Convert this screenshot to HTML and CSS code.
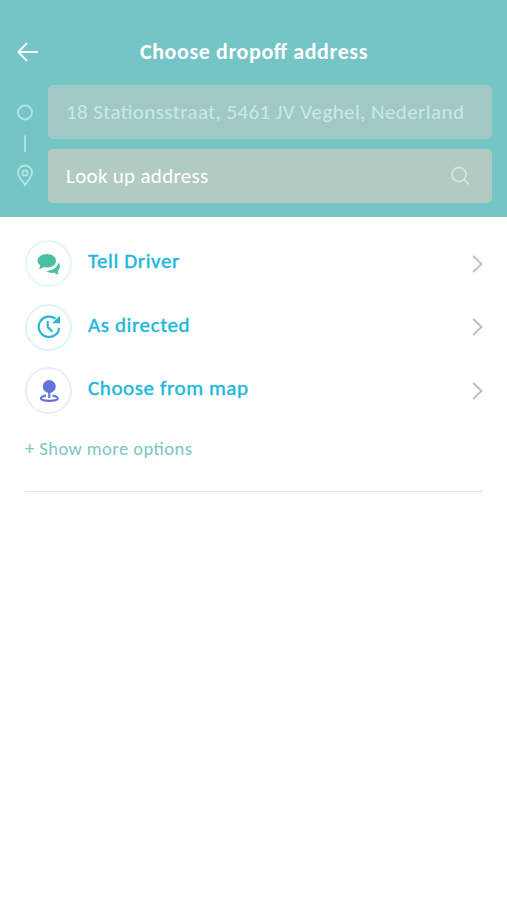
FILE: index.html
```
<!DOCTYPE html>
<html lang="en">
  <head>
    <meta charset="utf-8">
    <meta name="viewport" content="width=device-width">
    <title>Choose dropoff address</title>
    <link rel="stylesheet" href="styles.css">
  </head>
  <body>
    <header class="header">
      <div class="topbar">
        <svg class="back" width="22" height="20" viewBox="0 0 22 20"><path d="M22 10H2.500M11 1.200L2.300 10L11 18.800"/></svg>
        <h1><span>Choose dropoff address</span></h1>
      </div>
      <div class="route">
        <!-- pickup to dropoff markers -->
        <svg class="markers" width="18" height="84" viewBox="0 0 18 84">
          <circle cx="9" cy="9.500" r="7"/>
          <path d="M9 32.500V49"/>
          <path d="M9 82C6 77 2 74 2 69.500A7 7 0 0 1 16 69.500C16 74 12 77 9 82Z"/>
          <circle cx="9" cy="70" r="2.600"/>
        </svg>
        <div class="fields">
          <div class="field pickup"><span>18 Stationsstraat, 5461 JV Veghel, Nederland</span></div>
          <div class="field dropoff">
            <span>Look up address</span>
            <svg class="search" width="20" height="20" viewBox="0 0 20 20"><circle cx="9" cy="8.500" r="7"/><path d="M14 13.500L19 18.300"/></svg>
          </div>
        </div>
      </div>
    </header>
    <main>
      <ul class="options">
        <li>
          <div class="icon tell">
            <svg width="24" height="24" viewBox="0 0 24 24">
              <path d="M10 2C15 2 19 4.800 19 8.800S15 15.500 10 15.500C8.700 15.500 7.700 15.400 6.700 15.100C5.300 16.300 3.700 17 1.800 17.100C2.700 16 3.200 14.800 3.200 13.300C1.400 12 .5 10.600 .5 8.800C.5 4.800 5 2 10 2Z"/>
              <path d="M21.500 10.500C23.700 13.500 23.300 16.800 20.800 18.800C20.900 20.400 21.200 21.600 22 22.700C19.900 22.500 18.300 21.700 17 20.600C14.300 21.300 11.500 20.700 9.500 19C15.300 18.800 20.300 15.700 21.500 10.500Z"/>
            </svg>
          </div>
          <span class="label">Tell Driver</span>
          <svg class="chevron" width="11" height="18" viewBox="0 0 11 18"><path d="M1.200 1L9.500 9L1.200 17"/></svg>
        </li>
        <li>
          <div class="icon directed">
            <svg width="24" height="24" viewBox="0 0 24 24">
              <path class="line" d="M18.500 3.800C14 .3 7 1 3.500 6C-.5 12 2.500 19.700 9.500 21.600C16.500 23.300 22 18.500 22 12.800M10.700 6V12L15.500 16.800"/>
              <path d="M23 .8V8.300H14.800Z"/>
            </svg>
          </div>
          <span class="label">As directed</span>
          <svg class="chevron" width="11" height="18" viewBox="0 0 11 18"><path d="M1.200 1L9.500 9L1.200 17"/></svg>
        </li>
        <li>
          <div class="icon map">
            <svg width="24" height="24" viewBox="0 0 24 24">
              <circle cx="12.300" cy="7.500" r="6.500"/>
              <path class="line" d="M12.300 13V19M9 16.700C1.700 17.700 1.700 21.800 12.300 21.800S22.900 17.700 15.500 16.700"/>
            </svg>
          </div>
          <span class="label">Choose from map</span>
          <svg class="chevron" width="11" height="18" viewBox="0 0 11 18"><path d="M1.200 1L9.500 9L1.200 17"/></svg>
        </li>
      </ul>
      <div class="more"><span>+ Show more options</span></div>
    </main>
  </body>
</html>
```
FILE: styles.css
```
* { box-sizing: border-box; }
body {
  margin: 0;
  background: #fff;
  font-family: Carlito, Lato, sans-serif;
  font-feature-settings: "liga" 1;
}
svg {
  display: block;
  flex: none;
  fill: none;
  stroke-width: 1.8;
}
.header {
  height: 217px;
  padding: 36px 15px 0 16px;
  background: #75c5c6;
}
.topbar {
  display: grid;
  grid-template-columns: 22px 1fr 22px;
  align-items: center;
  height: 32px;
}
.back { stroke: #fff; }
h1 {
  margin: 0;
  text-align: center;
  color: #fff;
  font-size: 22px;
  line-height: 30px;
  font-weight: 700;
  letter-spacing: .6px;
}
.route {
  display: flex;
  margin-top: 17px;
}
.markers {
  margin: 18px 14px 0 0;
  stroke: #b4e5e3;
}
.fields {
  flex: 1;
  display: flex;
  flex-direction: column;
  gap: 10px;
}
.field {
  display: flex;
  align-items: center;
  justify-content: space-between;
  height: 54px;
  padding: 0 22px 0 18px;
  border-radius: 5px;
  font-size: 21px;
  letter-spacing: .4px;
  white-space: nowrap;
}
.pickup {
  background: #a0c9c5;
  color: #c8e9e5;
}
.dropoff {
  background: #b1cbc3;
  color: #fff;
  letter-spacing: .3px;
}
.search { stroke: #d0e5dd; }
.options {
  margin: 0;
  padding: 23px 24px 0 25px;
  list-style: none;
}
.options li {
  display: flex;
  align-items: center;
  height: 47px;
  margin-bottom: 16.5px;
}
.icon {
  display: flex;
  align-items: center;
  justify-content: center;
  width: 47px;
  height: 47px;
  margin-right: 16px;
  border: 2px solid;
  border-radius: 50%;
}
.icon svg { fill: currentColor; }
.icon .line {
  fill: none;
  stroke: currentColor;
  stroke-width: 2.2;
}
.icon.tell { color: #4bbf9f; border-color: #e2f7f4; }
.icon.directed { color: #27b7d5; border-color: #dcf7f8; }
.icon.map { color: #6474d8; border-color: #ececf6; }
.label {
  flex: 1;
  padding-bottom: 5px;
  color: #20b7da;
  font-size: 21px;
  letter-spacing: .6px;
  -webkit-text-stroke: .4px #20b7da;
}
.chevron { stroke: #b5c0c4; }
.more {
  height: 61px;
  margin: 0 24px 0 25px;
  padding-top: 7px;
  border-bottom: 1px solid #dfe2e3;
  color: #78c7c3;
  font-size: 18.5px;
  line-height: 22px;
  letter-spacing: .45px;
}
```
